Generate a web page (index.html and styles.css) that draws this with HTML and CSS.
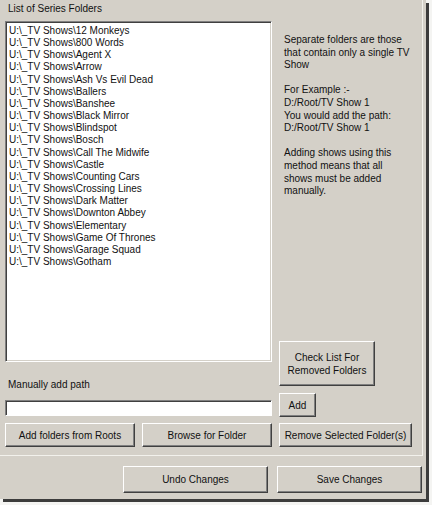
FILE: index.html
```html
<!DOCTYPE html>
<html>
<head>
<meta charset="utf-8">
<link rel="stylesheet" href="styles.css">
</head>
<body>
<div class="window">
  <div class="panel">
    <div class="main">
      <div class="left">
        <div class="label top-label">List of Series Folders</div>
        <div class="listbox">
          <div class="item">U:\_TV Shows\12 Monkeys</div>
          <div class="item">U:\_TV Shows\800 Words</div>
          <div class="item">U:\_TV Shows\Agent X</div>
          <div class="item">U:\_TV Shows\Arrow</div>
          <div class="item">U:\_TV Shows\Ash Vs Evil Dead</div>
          <div class="item">U:\_TV Shows\Ballers</div>
          <div class="item">U:\_TV Shows\Banshee</div>
          <div class="item">U:\_TV Shows\Black Mirror</div>
          <div class="item">U:\_TV Shows\Blindspot</div>
          <div class="item">U:\_TV Shows\Bosch</div>
          <div class="item">U:\_TV Shows\Call The Midwife</div>
          <div class="item">U:\_TV Shows\Castle</div>
          <div class="item">U:\_TV Shows\Counting Cars</div>
          <div class="item">U:\_TV Shows\Crossing Lines</div>
          <div class="item">U:\_TV Shows\Dark Matter</div>
          <div class="item">U:\_TV Shows\Downton Abbey</div>
          <div class="item">U:\_TV Shows\Elementary</div>
          <div class="item">U:\_TV Shows\Game Of Thrones</div>
          <div class="item">U:\_TV Shows\Garage Squad</div>
          <div class="item">U:\_TV Shows\Gotham</div>
        </div>
        <div class="label path-label">Manually add path</div>
        <div class="textbox"></div>
      </div>
      <div class="right">
        <div class="desc">
          <p>Separate folders are those<br>that contain only a single TV<br>Show</p>
          <p>For Example :-<br>D:/Root/TV Show 1<br>You would add the path:<br>D:/Root/TV Show 1</p>
          <p>Adding shows using this<br>method means that all<br>shows must be added<br>manually.</p>
        </div>
        <button class="btn check-btn">Check List For<br>Removed Folders</button>
        <button class="btn add-btn">Add</button>
      </div>
    </div>
    <div class="row-buttons">
      <div class="pair">
        <button class="btn row-btn">Add folders from Roots</button>
        <button class="btn row-btn">Browse for Folder</button>
      </div>
      <button class="btn row-btn remove-btn">Remove Selected Folder(s)</button>
    </div>
  </div>
  <div class="footer">
    <button class="btn foot-btn">Undo Changes</button>
    <button class="btn foot-btn">Save Changes</button>
  </div>
</div>
</body>
</html>
```
FILE: styles.css
```css
* { box-sizing: border-box; }
html, body {
  margin: 0;
  padding: 0;
  background: #f4f4f2;
  width: 432px;
  height: 505px;
  overflow: hidden;
}
body {
  font-family: "Liberation Sans", Arial, sans-serif;
  font-size: 10px;
  color: #111;
}
.window {
  width: 426px;
  height: 499px;
  background: #d4d0c8;
  box-shadow: 3px 3px 0 #3c3c3c;
  display: flex;
  flex-direction: column;
}
.panel {
  width: 423px;
  height: 456px;
  border-right: 1px solid #f2f1ec;
  border-bottom: 1px solid #f2f1ec;
  padding: 0 0 0 5px;
  display: flex;
  flex-direction: column;
  row-gap: 6px;
}
.main {
  display: grid;
  grid-template-columns: 267px 1fr;
  column-gap: 7px;
  height: 417px;
}
.left {
  display: flex;
  flex-direction: column;
}
.label {
  line-height: 13px;
  padding-left: 3px;
}
.top-label {
  height: 21px;
  padding-top: 2px;
}
.listbox {
  height: 341px;
  background: #fff;
  border-style: solid;
  border-width: 1px;
  border-color: #808080 #fff #fff #808080;
  box-shadow: inset 1px 1px 0 #404040, inset -1px -1px 0 #d4d0c8;
  padding: 3px 0 0 3px;
}
.item {
  line-height: 12.15px;
  white-space: nowrap;
}
.path-label {
  margin-top: 16px;
  height: 22px;
}
.textbox {
  height: 16px;
  background: #fff;
  border-style: solid;
  border-width: 1px;
  border-color: #808080 #fff #fff #808080;
  box-shadow: inset 1px 1px 0 #404040;
}
.right {
  display: flex;
  flex-direction: column;
  align-items: flex-start;
}
.desc {
  flex: 1;
  padding: 34px 0 0 5px;
  line-height: 12.6px;
}
.desc p {
  margin: 0 0 12.6px 0;
}
.btn {
  font-family: "Liberation Sans", Arial, sans-serif;
  font-size: 10px;
  color: #111;
  background: #d4d0c8;
  border-style: solid;
  border-width: 1px;
  border-color: #fff #404040 #404040 #fff;
  box-shadow: inset -1px -1px 0 #808080;
  padding: 0;
  margin: 0;
  line-height: 13px;
  white-space: nowrap;
}
.check-btn {
  width: 96px;
  height: 45px;
}
.add-btn {
  width: 37px;
  height: 24px;
  margin-top: 7px;
}
.row-buttons {
  display: grid;
  grid-template-columns: 267px 1fr;
  column-gap: 7px;
}
.pair {
  display: flex;
  column-gap: 7px;
}
.row-btn {
  width: 130px;
  height: 24px;
}
.remove-btn {
  width: 133px;
}
.footer {
  flex: 1;
  display: flex;
  justify-content: flex-end;
  column-gap: 9px;
  padding: 10px 4px 0 0;
}
.foot-btn {
  width: 145px;
  height: 27px;
}
```
